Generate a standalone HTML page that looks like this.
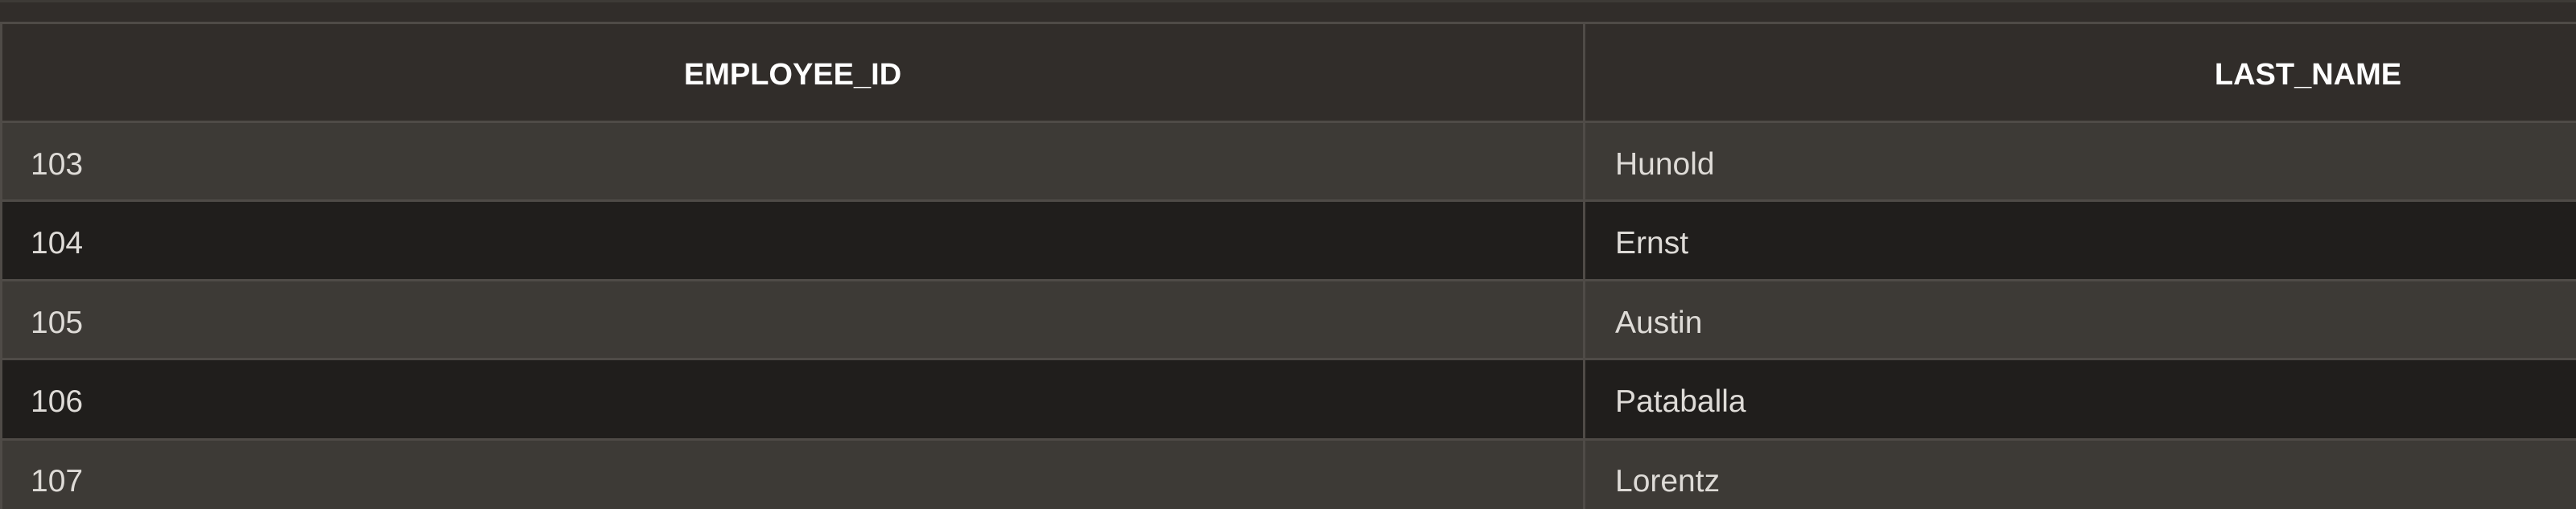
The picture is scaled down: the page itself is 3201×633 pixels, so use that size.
<!DOCTYPE html>
<html><head><style>
html,body{margin:0;padding:0;}
body{width:3201px;height:633px;overflow:hidden;background:#312d2a;position:relative;font-family:"Liberation Sans",sans-serif;}
.a{position:absolute;}
.h{color:#fff;font-weight:bold;font-size:38px;line-height:40px;top:73px;width:800px;text-align:center;}
.t{color:#dedbd7;font-size:39px;line-height:40px;}
</style></head><body>
<div class="a" style="left:0;top:0;width:3201px;height:3px;background:#3d3a36"></div>
<div class="a" style="left:0;top:27px;width:3201px;height:3px;background:#4f4b47"></div>
<div class="a" style="left:0;top:27px;width:3px;height:606px;background:#4f4b47"></div>
<div class="a" style="left:3px;top:30px;width:3198px;height:120px;background:#312d2a"></div>
<div class="a" style="left:0;top:150px;width:3201px;height:3px;background:#4f4b47"></div>
<div class="a" style="left:3px;top:153px;width:3198px;height:95px;background:#3d3a36"></div>
<div class="a" style="left:0;top:248px;width:3201px;height:3px;background:#4f4b47"></div>
<div class="a" style="left:3px;top:251px;width:3198px;height:96px;background:#201e1c"></div>
<div class="a" style="left:0;top:347px;width:3201px;height:3px;background:#4f4b47"></div>
<div class="a" style="left:3px;top:350px;width:3198px;height:95px;background:#3d3a36"></div>
<div class="a" style="left:0;top:445px;width:3201px;height:3px;background:#4f4b47"></div>
<div class="a" style="left:3px;top:448px;width:3198px;height:97px;background:#201e1c"></div>
<div class="a" style="left:0;top:545px;width:3201px;height:3px;background:#4f4b47"></div>
<div class="a" style="left:3px;top:548px;width:3198px;height:85px;background:#3d3a36"></div>
<div class="a" style="left:1967px;top:30px;width:3px;height:603px;background:#4f4b47"></div>
<div class="a h" style="left:585px">EMPLOYEE_ID</div>
<div class="a h" style="left:2468px">LAST_NAME</div>
<div class="a t" style="left:38px;top:185px">103</div>
<div class="a t" style="left:38px;top:283px">104</div>
<div class="a t" style="left:38px;top:382px">105</div>
<div class="a t" style="left:38px;top:480px">106</div>
<div class="a t" style="left:38px;top:579px">107</div>
<div class="a t" style="left:2007px;top:185px">Hunold</div>
<div class="a t" style="left:2007px;top:283px">Ernst</div>
<div class="a t" style="left:2007px;top:382px">Austin</div>
<div class="a t" style="left:2007px;top:480px">Pataballa</div>
<div class="a t" style="left:2007px;top:579px">Lorentz</div>
</body></html>
